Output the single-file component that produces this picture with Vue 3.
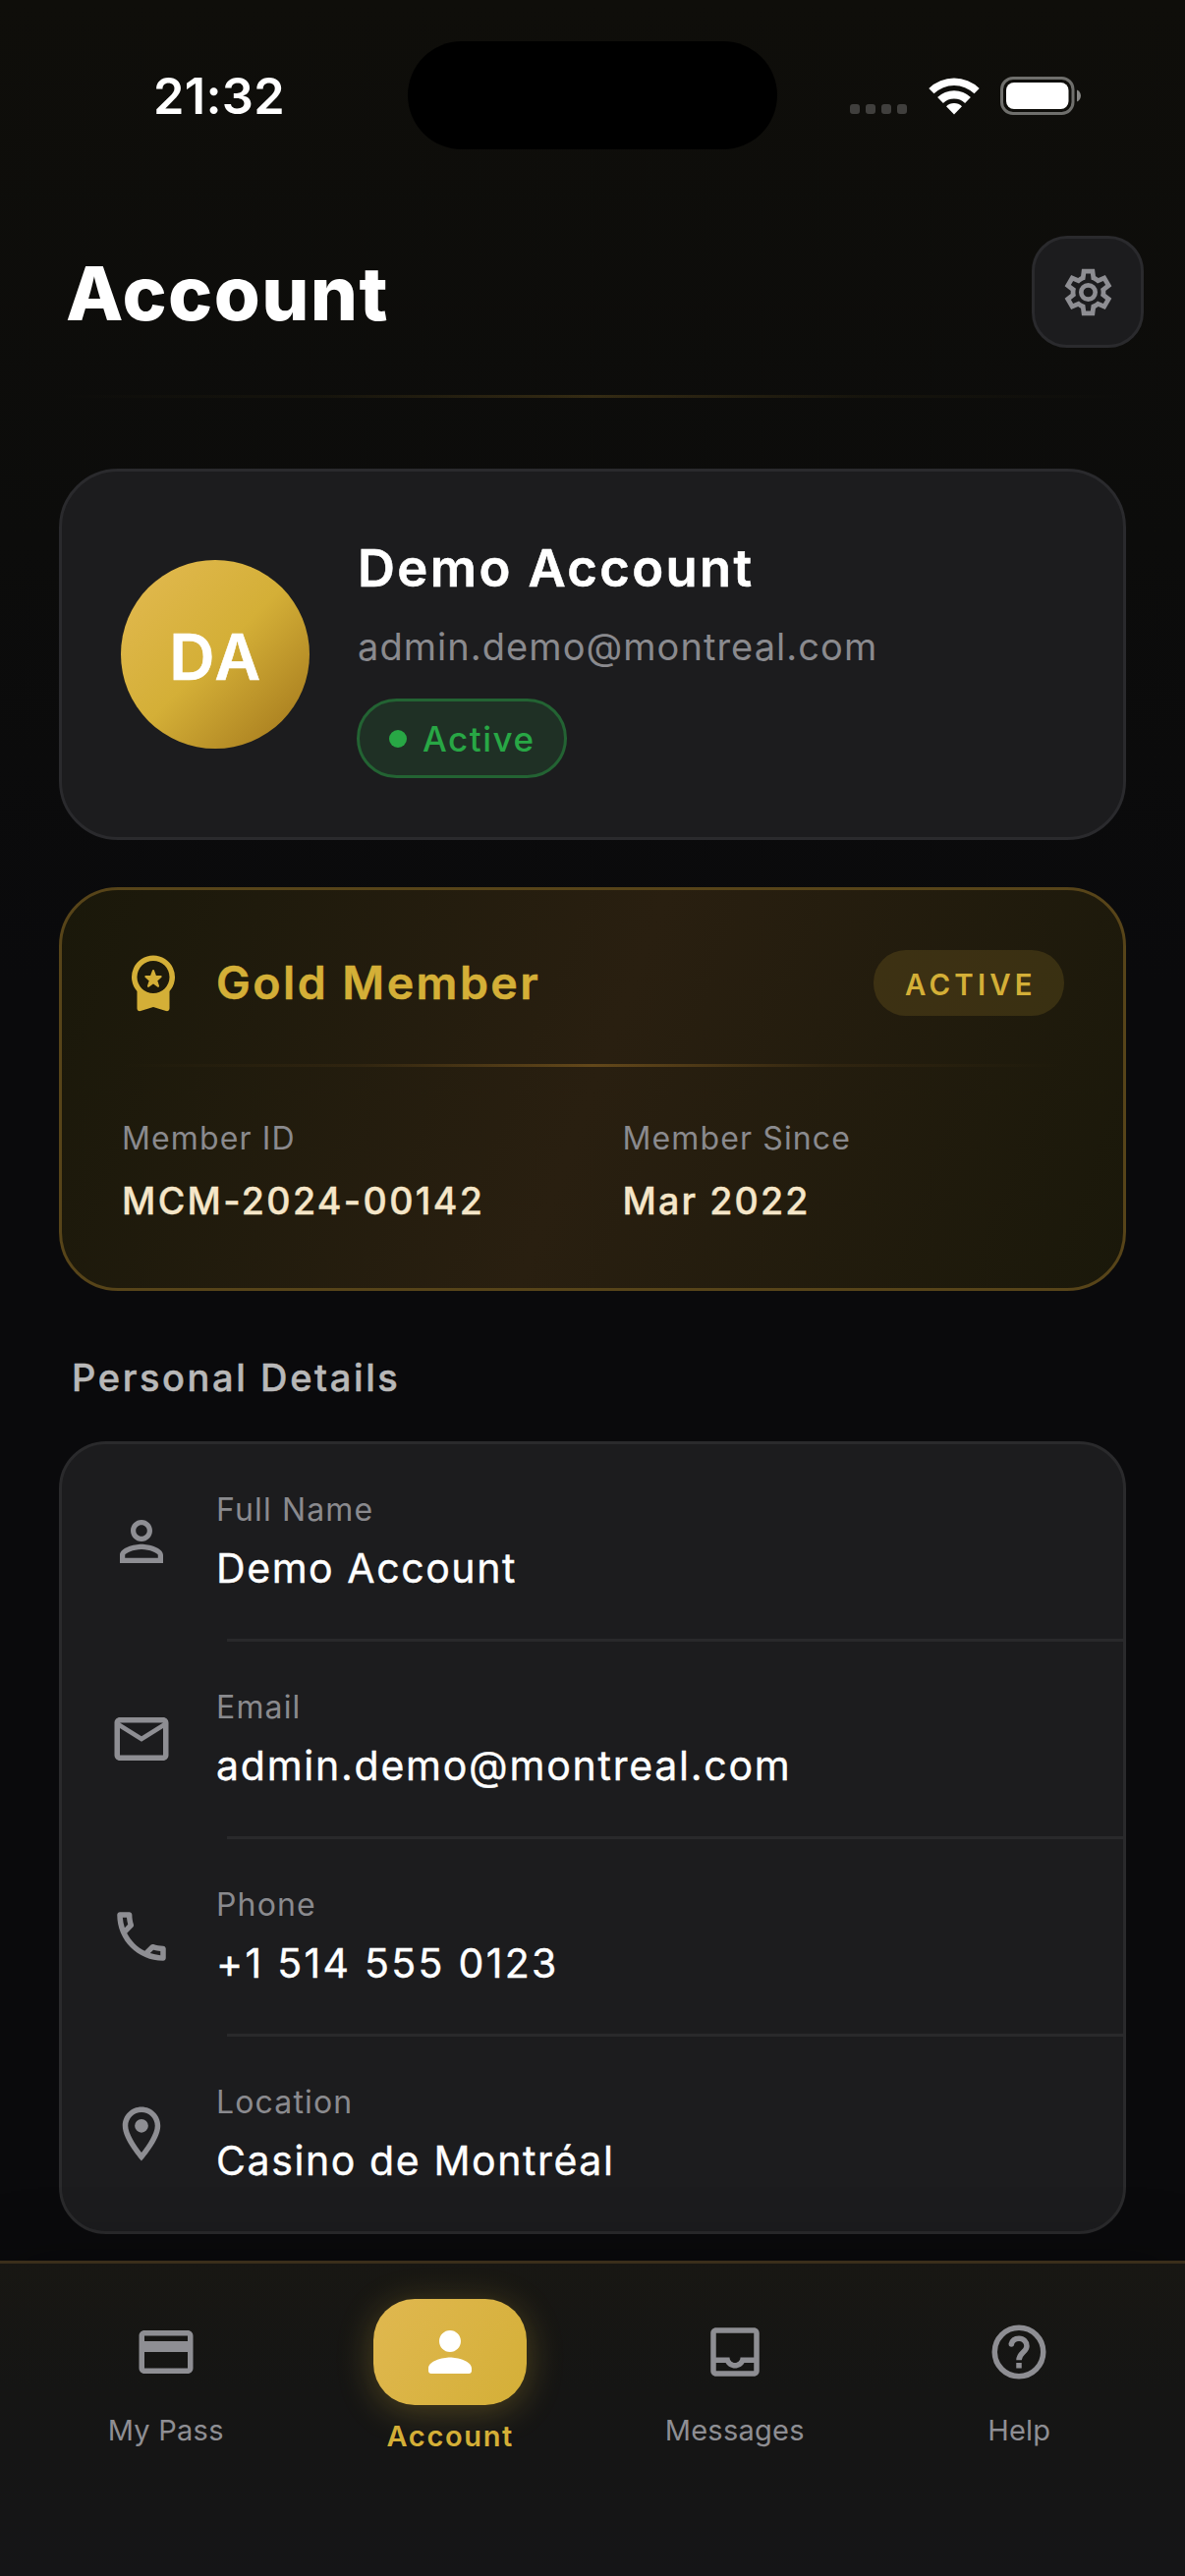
<script setup>
const details = [
  {
    label: 'Full Name',
    value: 'Demo Account',
    track: 1.57,
    icon: 'M12 5.9c1.16 0 2.1.94 2.1 2.1s-.94 2.1-2.1 2.1S9.9 9.16 9.9 8s.94-2.1 2.1-2.1m0 9c2.97 0 6.1 1.46 6.1 2.1v1.1H5.9V17c0-.64 3.13-2.1 6.1-2.1M12 4C9.79 4 8 5.79 8 8s1.79 4 4 4 4-1.79 4-4-1.79-4-4-4zm0 9c-2.67 0-8 1.34-8 4v3h16v-3c0-2.66-5.33-4-8-4z',
  },
  {
    label: 'Email',
    value: 'admin.demo@montreal.com',
    track: 1.76,
    icon: 'M22 6c0-1.1-.9-2-2-2H4c-1.1 0-2 .9-2 2v12c0 1.1.9 2 2 2h16c1.1 0 2-.9 2-2V6zm-2 0l-8 5-8-5h16zm0 12H4V8l8 5 8-5v10z',
  },
  {
    label: 'Phone',
    value: '+1 514 555 0123',
    track: 2.3,
    icon: 'M6.54 5c.06.89.21 1.76.45 2.59l-1.2 1.2c-.41-1.2-.67-2.47-.76-3.79h1.51m9.86 12.02c.85.24 1.72.39 2.6.45v1.49c-1.32-.09-2.59-.35-3.8-.75l1.2-1.19M7.5 3H4c-.55 0-1 .45-1 1 0 9.39 7.61 17 17 17 .55 0 1-.45 1-1v-3.49c0-.55-.45-1-1-1-1.24 0-2.45-.2-3.57-.57-.1-.04-.21-.05-.31-.05-.26 0-.51.1-.71.29l-2.2 2.2c-2.83-1.45-5.15-3.76-6.59-6.59l2.2-2.2c.28-.28.36-.67.25-1.02C8.7 6.45 8.5 5.25 8.5 4c0-.55-.45-1-1-1z',
  },
  {
    label: 'Location',
    value: 'Casino de Montréal',
    track: 1.6,
    icon: 'M12 2C8.13 2 5 5.13 5 9c0 5.25 7 13 7 13s7-7.75 7-13c0-3.87-3.13-7-7-7zM7 9c0-2.76 2.24-5 5-5s5 2.24 5 5c0 2.88-2.88 7.19-5 9.88C9.92 16.21 7 11.85 7 9zM12 6.5a2.5 2.5 0 1 0 0 5 2.5 2.5 0 0 0 0-5z',
  },
]
</script>

<template>
  <div class="screen">
    <header class="status">
      <span class="time">21:32</span>
      <span class="island"></span>
      <span class="indicators">
        <span class="dots"><i></i><i></i><i></i><i></i></span>
        <svg class="wifi" viewBox="0 0 52 38" fill="#fff">
          <path d="M.3 10.9A37 37 0 0 1 51.7 10.9L46.5 16.3A29.5 29.5 0 0 0 5.5 16.3Z" />
          <path d="M9.1 20A24.3 24.3 0 0 1 42.9 20L37.1 26A16 16 0 0 0 14.9 26Z" />
          <path d="M18 29.2A11.5 11.5 0 0 1 34 29.2L26 37.5Z" />
        </svg>
        <svg class="battery" viewBox="0 0 82 39">
          <rect x="1.5" y="1.5" width="72.5" height="36" rx="11.5" fill="none" stroke="#6f6f6c" stroke-width="3" />
          <rect x="6" y="6" width="63.5" height="27" rx="8" fill="#fff" />
          <path d="M78 13.5c5.3 2 5.3 10 0 12z" fill="#868684" />
        </svg>
      </span>
    </header>

    <main class="content">
      <div class="heading">
        <h1>Account</h1>
        <button class="settings" aria-label="Settings">
          <svg viewBox="0 -960 960 960" fill="#8e8e93">
            <path fill-rule="evenodd" d="m370-80-16-128q-13-5-24.5-12T307-235l-119 50L78-375l103-78q-1-7-1-13.5v-27q0-6.5 1-13.5L78-585l110-190 119 50q11-8 23-15t24-12l16-128h220l16 128q13 5 24.5 12t22.5 15l119-50 110 190-103 78q1 7 1 13.5v27q0 6.5-2 13.5l103 78-110 190-118-50q-11 8-23 15t-24 12L590-80H370Zm70-80h79l14-106q31-8 57.5-23.5T639-327l99 41 39-68-86-65q5-14 7-29.5t2-31.5q0-16-2-31.5t-7-29.5l86-65-39-68-99 42q-22-23-48.5-38.5T533-694l-13-106h-79l-14 106q-31 8-57.5 23.5T321-633l-99-41-39 68 86 64q-5 15-7 30t-2 32q0 16 2 31t7 30l-86 65 39 68 99-42q22 23 48.5 38.5T427-266l13 106Z" />
            <circle cx="480" cy="-480" r="121" fill="none" stroke="#8e8e93" stroke-width="78" />
          </svg>
        </button>
      </div>
      <div class="rule"></div>

      <section class="card profile">
        <div class="avatar">DA</div>
        <div class="who">
          <div class="name">Demo Account</div>
          <div class="mail">admin.demo@montreal.com</div>
          <div class="badge"><i></i><span>Active</span></div>
        </div>
      </section>

      <section class="card gold">
        <div class="tier">
          <svg class="icon medal" viewBox="0 0 24 24" fill="#d4af37">
            <path fill-rule="evenodd" d="M12 2a8 8 0 0 1 6 13.29V21.6c0 .7-.65 1.15-1.3.95L12 21.05 7.3 22.55C6.65 22.75 6 22.3 6 21.6V15.29A8 8 0 0 1 12 2zm0 2a6 6 0 1 0 0 12 6 6 0 0 0 0-12z" />
            <path d="M12 7.6l.8 2.2h2l-1.6 1.5.65 2.1L12 12.1l-1.85 1.3.65-2.1-1.6-1.5h2z" stroke="#d4af37" stroke-width=".7" stroke-linejoin="round" />
          </svg>
          <h2>Gold Member</h2>
          <span class="pill">ACTIVE</span>
        </div>
        <div class="gold-rule"></div>
        <div class="facts">
          <div>
            <div class="fact-label">Member ID</div>
            <div class="fact-value">MCM-2024-00142</div>
          </div>
          <div>
            <div class="fact-label">Member Since</div>
            <div class="fact-value since">Mar 2022</div>
          </div>
        </div>
      </section>

      <h3>Personal Details</h3>

      <section class="card list">
        <div v-for="d in details" :key="d.label" class="row">
          <svg class="icon" viewBox="0 0 24 24" fill="#8e8e93"><path :d="d.icon" /></svg>
          <div>
            <div class="row-label">{{ d.label }}</div>
            <div class="row-value" :style="{ letterSpacing: d.track + 'px' }">{{ d.value }}</div>
          </div>
        </div>
      </section>
    </main>

    <nav class="tabs">
      <a class="tab">
        <svg class="icon" viewBox="0 0 24 24" fill="#8e8e93"><path d="M20 4H4c-1.11 0-1.99.89-1.99 2L2 18c0 1.11.89 2 2 2h16c1.11 0 2-.89 2-2V6c0-1.11-.89-2-2-2zm0 14H4v-6h16v6zm0-10H4V6h16v2z" /></svg>
        <span>My Pass</span>
      </a>
      <a class="tab active">
        <div class="bubble">
          <svg class="icon" viewBox="0 0 24 24" fill="#fff"><path d="M12 12c2.21 0 4-1.79 4-4s-1.79-4-4-4-4 1.79-4 4 1.79 4 4 4zm0 2c-2.67 0-8 1.34-8 4v1c0 .55.45 1 1 1h14c.55 0 1-.45 1-1v-1c0-2.66-5.33-4-8-4z" /></svg>
        </div>
        <span>Account</span>
      </a>
      <a class="tab">
        <svg class="icon" viewBox="0 0 24 24" fill="#8e8e93"><path d="M19 3H5c-1.1 0-2 .9-2 2v14c0 1.1.9 2 2 2h14c1.1 0 2-.9 2-2V5c0-1.1-.9-2-2-2zm0 16H5v-3h3.56c.69 1.19 1.97 2 3.45 2s2.75-.81 3.45-2H19v3zm0-5h-4.99c0 1.1-.9 2-2 2s-2-.9-2-2H5V5h14v9z" /></svg>
        <span>Messages</span>
      </a>
      <a class="tab">
        <svg class="icon" viewBox="0 0 24 24" fill="none" stroke="#8e8e93" stroke-width="2">
          <circle cx="12" cy="12" r="9" />
          <path d="M9.2 9.1C9.5 7.8 10.6 7 12 7c1.7 0 2.9 1.3 2.9 2.8 0 2.2-2.9 2.5-2.9 5.2" />
          <circle cx="9.2" cy="9.1" r="1" fill="#8e8e93" stroke="none" />
          <path d="M12 16v2" />
        </svg>
        <span>Help</span>
      </a>
    </nav>
  </div>
</template>

<style>
body {
  background: #0a0a0c;
}
</style>

<style scoped>
.screen {
  box-sizing: border-box;
  width: 1206px;
  height: 2622px;
  display: flex;
  flex-direction: column;
  overflow: hidden;
  background: linear-gradient(180deg, #0f0e0a 0, #0c0c0b 550px, #0a0a0c 1000px, #0a0a0c 100%);
  color: #fff;
  font-family: Inter, "Liberation Sans", sans-serif;
}
.screen * {
  box-sizing: border-box;
}
h1, h2, h3 {
  margin: 0;
}
svg {
  display: block;
  flex: none;
}
.icon {
  width: 66px;
  height: 66px;
}

/* Status bar */
.status {
  flex: none;
  height: 240px;
  padding: 42px 106px 88px 156px;
  display: flex;
  align-items: center;
}
.time {
  width: 259px;
  padding-top: 1px;
  font-size: 50.5px;
  font-weight: 600;
  line-height: 60px;
  letter-spacing: 0.3px;
}
.island {
  width: 376px;
  height: 110px;
  border-radius: 55px;
  background: #000;
}
.indicators {
  margin-left: auto;
  display: flex;
  align-items: flex-end;
}
.dots {
  display: flex;
  gap: 6px;
  margin: 0 22px 1px 0;
}
.dots i {
  width: 10px;
  height: 10px;
  border-radius: 3px;
  background: #403f3d;
}
.wifi {
  width: 52px;
  height: 38px;
  margin: 0 21px 0 0;
}
.battery {
  width: 82px;
  height: 39px;
}

/* Page header */
.content {
  flex: 1;
  min-height: 0;
}
.heading {
  height: 114px;
  padding: 0 42px 0 67px;
  display: flex;
  align-items: center;
  justify-content: space-between;
}
h1 {
  font-size: 76px;
  font-weight: 800;
  line-height: 114px;
  letter-spacing: 1.4px;
  padding-top: 2px;
}
.settings {
  width: 114px;
  height: 114px;
  padding: 0;
  border: 3px solid #2a2a2d;
  border-radius: 36px;
  background: #1c1c1e;
  display: flex;
  align-items: center;
  justify-content: center;
}
.settings svg {
  width: 57px;
  height: 57px;
}
.rule {
  height: 3px;
  margin: 48px 60px 72px;
  background: linear-gradient(90deg, rgba(0, 0, 0, 0), rgba(106, 88, 28, 0.1) 25%, rgba(212, 165, 55, 0.2) 50%, rgba(106, 88, 28, 0.1) 75%, rgba(0, 0, 0, 0));
}

/* Cards */
.card {
  margin: 0 60px;
  border: 3px solid #2a2a2d;
  border-radius: 60px;
  background: #1c1c1e;
}
.profile {
  height: 378px;
  padding: 0 60px;
  display: flex;
  align-items: flex-start;
}
.avatar {
  width: 192px;
  height: 192px;
  margin: 90px 48px 0 0;
  border-radius: 50%;
  background: linear-gradient(135deg, #e3ba52 0%, #d4af37 50%, #a0741a 100%);
  display: flex;
  align-items: center;
  justify-content: center;
  font-size: 64px;
  font-weight: 600;
  letter-spacing: 2.6px;
  padding: 4px 0 0 2px;
  -webkit-text-stroke: 0.6px currentColor;
}
.who {
  padding-top: 67px;
}
.name {
  padding-left: 1px;
  font-size: 52.5px;
  font-weight: 600;
  line-height: 63px;
  letter-spacing: 2.4px;
  -webkit-text-stroke: 0.6px currentColor;
}
.mail {
  margin-top: 24px;
  padding-left: 1px;
  font-size: 38px;
  line-height: 48px;
  letter-spacing: 1.05px;
  color: #8a8a8e;
}
.badge {
  width: 214px;
  height: 81px;
  margin-top: 29px;
  padding-left: 30px;
  border: 3px solid #236333;
  border-radius: 41px;
  background: #1f3025;
  display: flex;
  align-items: center;
  gap: 16px;
  font-size: 35px;
  font-weight: 500;
  letter-spacing: 1.52px;
  color: #28a745;
}
.badge i {
  width: 18px;
  height: 18px;
  border-radius: 50%;
  background: #28a745;
}

/* Membership */
.gold {
  height: 411px;
  margin-top: 48px;
  padding: 61px 60px 0;
  border-color: #574419;
  background: linear-gradient(110.7deg, #1a180a 0%, #291f10 50%, #1a180a 100%);
}
.tier {
  height: 67px;
  display: flex;
  align-items: center;
}
.medal {
  margin-top: -1px;
}
h2 {
  margin: -2px 0 0 31px;
  font-size: 46.5px;
  font-weight: 600;
  line-height: 60px;
  letter-spacing: 2.45px;
  color: #d4af37;
  -webkit-text-stroke: 0.5px currentColor;
}
.pill {
  width: 194px;
  height: 67px;
  margin-left: auto;
  padding: 3px 0 0 32px;
  border-radius: 33px;
  background: rgba(212, 175, 55, 0.15);
  font-size: 29.4px;
  font-weight: 600;
  line-height: 66px;
  letter-spacing: 4.2px;
  color: #d4af37;
}
.gold-rule {
  height: 3px;
  margin: 49px 0 50px;
  background: linear-gradient(90deg, rgba(0, 0, 0, 0), rgba(120, 82, 28, 0.15) 25%, rgba(212, 150, 45, 0.34) 50%, rgba(120, 82, 28, 0.15) 75%, rgba(0, 0, 0, 0));
}
.facts {
  display: grid;
  grid-template-columns: 1fr 1fr;
  column-gap: 60px;
  padding-left: 1px;
}
.fact-label {
  font-size: 32px;
  line-height: 45px;
  letter-spacing: 1.12px;
  color: #8a8a8e;
}
.fact-value {
  margin-top: 16px;
  font-size: 37.6px;
  font-weight: 500;
  line-height: 51px;
  letter-spacing: 2.35px;
  color: #f5e6c8;
  -webkit-text-stroke: 0.4px currentColor;
}
.fact-value.since {
  letter-spacing: 2.15px;
}

/* Details */
h3 {
  margin: 62px 0 39px 73px;
  font-size: 38px;
  font-weight: 500;
  line-height: 52px;
  letter-spacing: 2.6px;
  color: #b8b8b8;
  -webkit-text-stroke: 0.5px currentColor;
}
.list {
  border-color: #2a2a2c;
  border-radius: 48px;
}
.row {
  height: 201px;
  padding: 43px 0 0 48px;
  display: flex;
  gap: 43px;
  background: linear-gradient(#29292b, #29292b) 168px 100% / 100% 3px no-repeat;
}
.row:last-child {
  height: 198px;
  background: none;
}
.row .icon {
  margin-top: 23px;
}
.row-label {
  font-size: 32px;
  line-height: 48px;
  letter-spacing: 1.15px;
  color: #8a8a8e;
}
.row-value {
  margin-top: 7px;
  font-size: 41px;
  line-height: 57px;
  -webkit-text-stroke: 0.4px currentColor;
}

/* Tab bar */
.tabs {
  position: relative;
  flex: none;
  height: 321px;
  padding: 36px 24px 0;
  border-top: 3px solid #3a2e1b;
  background: linear-gradient(180deg, #181713 0%, #151514 40%, #151517 100%);
  box-shadow: 0 -12px 60px rgba(0, 0, 0, 0.2);
  display: grid;
  grid-template-columns: repeat(4, 1fr);
}
.tab {
  display: flex;
  flex-direction: column;
  align-items: center;
  padding-top: 21px;
  font-size: 29px;
  line-height: 36px;
  letter-spacing: 0.25px;
  color: #8e8e93;
}
.tab > .icon + span {
  margin-top: 29px;
}
.tab.active {
  padding-top: 0;
  font-weight: 600;
  letter-spacing: 1.65px;
  color: #d4af37;
}
.bubble {
  width: 156px;
  height: 108px;
  margin-bottom: 14px;
  border-radius: 42px;
  background: linear-gradient(124.7deg, #e0b850 0%, #d4af37 100%);
  box-shadow: 0 6px 36px rgba(212, 175, 55, 0.3);
  display: flex;
  align-items: center;
  justify-content: center;
}
</style>
